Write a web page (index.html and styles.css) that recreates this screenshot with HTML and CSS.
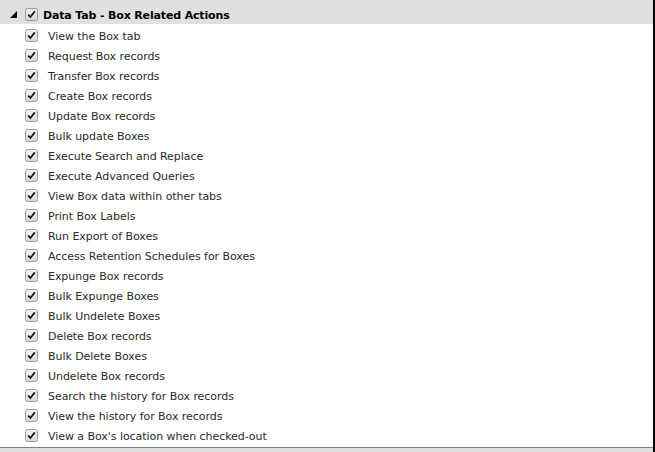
FILE: index.html
```html
<!DOCTYPE html>
<html>
<head>
<meta charset="utf-8">
<link rel="stylesheet" href="styles.css">
</head>
<body>
<div class="panel">
  <div class="group-header">
    <span class="toggle"></span>
    <span class="cb"><svg viewBox="0 0 13 13" width="13" height="13"><defs><linearGradient id="g1" x1="0" y1="0" x2="0" y2="1"><stop offset="0" stop-color="#f4f4f4"/><stop offset="1" stop-color="#d8d8d8"/></linearGradient></defs><rect x="0.5" y="0.5" width="12" height="12" rx="2" fill="url(#g1)" stroke="#9a9a9a"/><path d="M3.2 6.6 L5.4 9 L9.8 3.4" fill="none" stroke="#111" stroke-width="1.7"/></svg></span>
    <span class="group-title">Data Tab - Box Related Actions</span>
  </div>
  <ul class="items">
    <li><span class="cb"><svg viewBox="0 0 13 13" width="13" height="13"><rect x="0.5" y="0.5" width="12" height="12" rx="2" fill="url(#g1)" stroke="#9a9a9a"/><path d="M3.2 6.6 L5.4 9 L9.8 3.4" fill="none" stroke="#111" stroke-width="1.7"/></svg></span>View the Box tab</li>
    <li><span class="cb"><svg viewBox="0 0 13 13" width="13" height="13"><rect x="0.5" y="0.5" width="12" height="12" rx="2" fill="url(#g1)" stroke="#9a9a9a"/><path d="M3.2 6.6 L5.4 9 L9.8 3.4" fill="none" stroke="#111" stroke-width="1.7"/></svg></span>Request Box records</li>
    <li><span class="cb"><svg viewBox="0 0 13 13" width="13" height="13"><rect x="0.5" y="0.5" width="12" height="12" rx="2" fill="url(#g1)" stroke="#9a9a9a"/><path d="M3.2 6.6 L5.4 9 L9.8 3.4" fill="none" stroke="#111" stroke-width="1.7"/></svg></span>Transfer Box records</li>
    <li><span class="cb"><svg viewBox="0 0 13 13" width="13" height="13"><rect x="0.5" y="0.5" width="12" height="12" rx="2" fill="url(#g1)" stroke="#9a9a9a"/><path d="M3.2 6.6 L5.4 9 L9.8 3.4" fill="none" stroke="#111" stroke-width="1.7"/></svg></span>Create Box records</li>
    <li><span class="cb"><svg viewBox="0 0 13 13" width="13" height="13"><rect x="0.5" y="0.5" width="12" height="12" rx="2" fill="url(#g1)" stroke="#9a9a9a"/><path d="M3.2 6.6 L5.4 9 L9.8 3.4" fill="none" stroke="#111" stroke-width="1.7"/></svg></span>Update Box records</li>
    <li><span class="cb"><svg viewBox="0 0 13 13" width="13" height="13"><rect x="0.5" y="0.5" width="12" height="12" rx="2" fill="url(#g1)" stroke="#9a9a9a"/><path d="M3.2 6.6 L5.4 9 L9.8 3.4" fill="none" stroke="#111" stroke-width="1.7"/></svg></span>Bulk update Boxes</li>
    <li><span class="cb"><svg viewBox="0 0 13 13" width="13" height="13"><rect x="0.5" y="0.5" width="12" height="12" rx="2" fill="url(#g1)" stroke="#9a9a9a"/><path d="M3.2 6.6 L5.4 9 L9.8 3.4" fill="none" stroke="#111" stroke-width="1.7"/></svg></span>Execute Search and Replace</li>
    <li><span class="cb"><svg viewBox="0 0 13 13" width="13" height="13"><rect x="0.5" y="0.5" width="12" height="12" rx="2" fill="url(#g1)" stroke="#9a9a9a"/><path d="M3.2 6.6 L5.4 9 L9.8 3.4" fill="none" stroke="#111" stroke-width="1.7"/></svg></span>Execute Advanced Queries</li>
    <li><span class="cb"><svg viewBox="0 0 13 13" width="13" height="13"><rect x="0.5" y="0.5" width="12" height="12" rx="2" fill="url(#g1)" stroke="#9a9a9a"/><path d="M3.2 6.6 L5.4 9 L9.8 3.4" fill="none" stroke="#111" stroke-width="1.7"/></svg></span>View Box data within other tabs</li>
    <li><span class="cb"><svg viewBox="0 0 13 13" width="13" height="13"><rect x="0.5" y="0.5" width="12" height="12" rx="2" fill="url(#g1)" stroke="#9a9a9a"/><path d="M3.2 6.6 L5.4 9 L9.8 3.4" fill="none" stroke="#111" stroke-width="1.7"/></svg></span>Print Box Labels</li>
    <li><span class="cb"><svg viewBox="0 0 13 13" width="13" height="13"><rect x="0.5" y="0.5" width="12" height="12" rx="2" fill="url(#g1)" stroke="#9a9a9a"/><path d="M3.2 6.6 L5.4 9 L9.8 3.4" fill="none" stroke="#111" stroke-width="1.7"/></svg></span>Run Export of Boxes</li>
    <li><span class="cb"><svg viewBox="0 0 13 13" width="13" height="13"><rect x="0.5" y="0.5" width="12" height="12" rx="2" fill="url(#g1)" stroke="#9a9a9a"/><path d="M3.2 6.6 L5.4 9 L9.8 3.4" fill="none" stroke="#111" stroke-width="1.7"/></svg></span>Access Retention Schedules for Boxes</li>
    <li><span class="cb"><svg viewBox="0 0 13 13" width="13" height="13"><rect x="0.5" y="0.5" width="12" height="12" rx="2" fill="url(#g1)" stroke="#9a9a9a"/><path d="M3.2 6.6 L5.4 9 L9.8 3.4" fill="none" stroke="#111" stroke-width="1.7"/></svg></span>Expunge Box records</li>
    <li><span class="cb"><svg viewBox="0 0 13 13" width="13" height="13"><rect x="0.5" y="0.5" width="12" height="12" rx="2" fill="url(#g1)" stroke="#9a9a9a"/><path d="M3.2 6.6 L5.4 9 L9.8 3.4" fill="none" stroke="#111" stroke-width="1.7"/></svg></span>Bulk Expunge Boxes</li>
    <li><span class="cb"><svg viewBox="0 0 13 13" width="13" height="13"><rect x="0.5" y="0.5" width="12" height="12" rx="2" fill="url(#g1)" stroke="#9a9a9a"/><path d="M3.2 6.6 L5.4 9 L9.8 3.4" fill="none" stroke="#111" stroke-width="1.7"/></svg></span>Bulk Undelete Boxes</li>
    <li><span class="cb"><svg viewBox="0 0 13 13" width="13" height="13"><rect x="0.5" y="0.5" width="12" height="12" rx="2" fill="url(#g1)" stroke="#9a9a9a"/><path d="M3.2 6.6 L5.4 9 L9.8 3.4" fill="none" stroke="#111" stroke-width="1.7"/></svg></span>Delete Box records</li>
    <li><span class="cb"><svg viewBox="0 0 13 13" width="13" height="13"><rect x="0.5" y="0.5" width="12" height="12" rx="2" fill="url(#g1)" stroke="#9a9a9a"/><path d="M3.2 6.6 L5.4 9 L9.8 3.4" fill="none" stroke="#111" stroke-width="1.7"/></svg></span>Bulk Delete Boxes</li>
    <li><span class="cb"><svg viewBox="0 0 13 13" width="13" height="13"><rect x="0.5" y="0.5" width="12" height="12" rx="2" fill="url(#g1)" stroke="#9a9a9a"/><path d="M3.2 6.6 L5.4 9 L9.8 3.4" fill="none" stroke="#111" stroke-width="1.7"/></svg></span>Undelete Box records</li>
    <li><span class="cb"><svg viewBox="0 0 13 13" width="13" height="13"><rect x="0.5" y="0.5" width="12" height="12" rx="2" fill="url(#g1)" stroke="#9a9a9a"/><path d="M3.2 6.6 L5.4 9 L9.8 3.4" fill="none" stroke="#111" stroke-width="1.7"/></svg></span>Search the history for Box records</li>
    <li><span class="cb"><svg viewBox="0 0 13 13" width="13" height="13"><rect x="0.5" y="0.5" width="12" height="12" rx="2" fill="url(#g1)" stroke="#9a9a9a"/><path d="M3.2 6.6 L5.4 9 L9.8 3.4" fill="none" stroke="#111" stroke-width="1.7"/></svg></span>View the history for Box records</li>
    <li><span class="cb"><svg viewBox="0 0 13 13" width="13" height="13"><rect x="0.5" y="0.5" width="12" height="12" rx="2" fill="url(#g1)" stroke="#9a9a9a"/><path d="M3.2 6.6 L5.4 9 L9.8 3.4" fill="none" stroke="#111" stroke-width="1.7"/></svg></span>View a Box's location when checked-out</li>
  </ul>
  <div class="next-header"></div>
</div>
</body>
</html>
```

FILE: styles.css
```css
html, body {
  margin: 0;
  padding: 0;
  background: #ffffff;
}
.panel {
  width: 653px;
  height: 452px;
  border-right: 2px solid #000;
  overflow: hidden;
  font-family: "DejaVu Sans", Verdana, sans-serif;
  font-size: 11px;
  color: #2a2a2a;
}
.group-header {
  height: 24px;
  background: #e0e0df;
  display: flex;
  align-items: flex-start;
}
.toggle {
  width: 0;
  height: 0;
  margin-left: 10px;
  margin-top: 11px;
  border-style: solid;
  border-width: 0 0 7px 7px;
  border-color: transparent transparent #000 transparent;
}
.group-header .cb {
  margin-left: 8px;
  margin-top: 8px;
}
.group-title {
  margin-left: 5px;
  margin-top: 9px;
  line-height: 13px;
  font-weight: bold;
  color: #000;
  font-size: 11px;
  letter-spacing: -0.15px;
}
.cb {
  display: inline-flex;
  width: 13px;
  height: 13px;
}
.cb svg {
  display: block;
}
.items {
  list-style: none;
  margin: 0;
  padding: 2px 0 1px 25px;
}
.items li {
  height: 20px;
  display: flex;
  align-items: center;
  letter-spacing: -0.05px;
}
.items li .cb {
  margin-right: 10px;
  margin-top: -2px;
}
.next-header {
  border-top: 1px solid #808080;
  height: 10px;
  background: #e0e0df;
}
```
